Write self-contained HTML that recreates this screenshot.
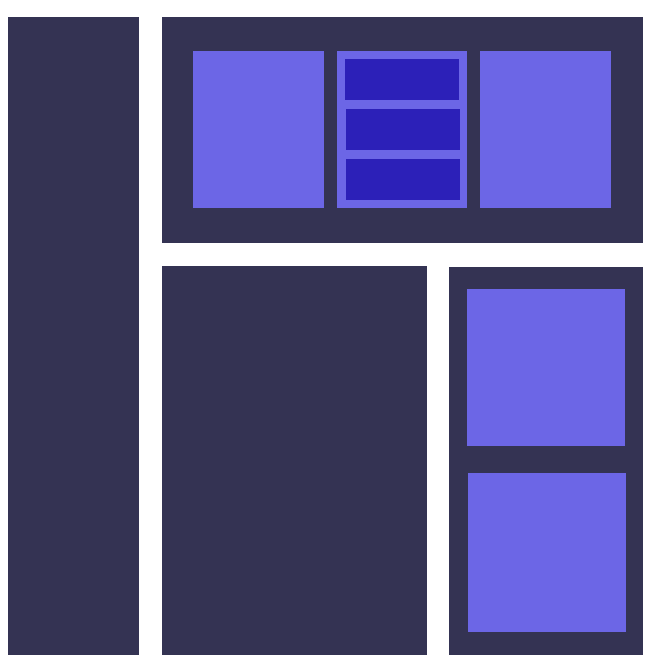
<!DOCTYPE html>
<html><head><style>
body{margin:0;width:660px;height:662px;background:#fff;position:relative;overflow:hidden}
div{position:absolute}
.d{background:#343353}.l{background:#6c66e6}.b{background:#2c20b8}
</style></head><body>
<div class="d" style="left:8px;top:17px;width:131px;height:638px"></div>
<div class="d" style="left:162px;top:17px;width:481px;height:226px"></div>
<div class="l" style="left:193px;top:51px;width:131px;height:157px"></div>
<div class="l" style="left:337px;top:51px;width:130px;height:157px"></div>
<div class="b" style="left:345px;top:59px;width:114px;height:41px"></div>
<div class="b" style="left:346px;top:109px;width:114px;height:41px"></div>
<div class="b" style="left:346px;top:159px;width:114px;height:41px"></div>
<div class="l" style="left:480px;top:51px;width:131px;height:157px"></div>
<div class="d" style="left:162px;top:266px;width:265px;height:389px"></div>
<div class="d" style="left:449px;top:267px;width:194px;height:388px"></div>
<div class="l" style="left:467px;top:289px;width:158px;height:157px"></div>
<div class="l" style="left:468px;top:473px;width:158px;height:159px"></div>
</body></html>
